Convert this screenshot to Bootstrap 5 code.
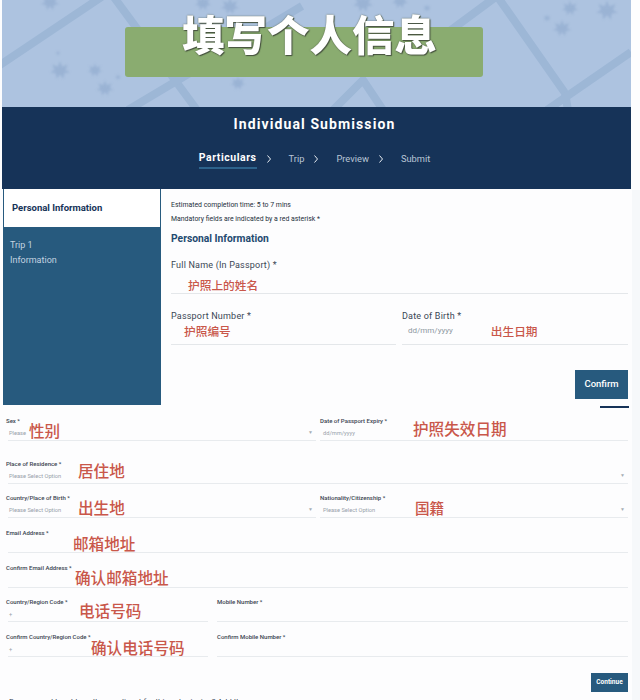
<!DOCTYPE html>
<html lang="zh">
<head>
<meta charset="utf-8">
<title>填写个人信息</title>
<link href="https://cdn.jsdelivr.net/npm/bootstrap@5.3.0/dist/css/bootstrap.min.css" rel="stylesheet">
<style>
html,body{background:#fdfdfe;font-family:"Roboto","Liberation Sans","Noto Sans CJK SC",sans-serif;}
body{width:640px;height:700px;overflow:hidden;position:relative;}
.hero{height:107px;margin-left:2px;width:629px;background:#adc3e0;position:relative;overflow:hidden;}
.hero-art{position:absolute;left:0;top:0;width:629px;height:107px;}
.soft{filter:blur(.6px);}
.softer{filter:blur(1px);}
.hero-plate{position:absolute;left:123px;top:27px;width:358px;height:50px;background:#8aac70;border-radius:3px;}
.hero-title{position:absolute;left:180px;top:8px;font:900 42.5px/50px "Noto Sans CJK SC",sans-serif;color:#fff;text-shadow:0 0 1.5px #46523f,1px 1px 1px #46523f;white-space:nowrap;}
.sub-head{height:82px;margin-left:2px;width:629px;background:#163358;color:#fff;text-align:center;}
.sub-title{font-size:14px;font-weight:700;letter-spacing:1.1px;line-height:18px;padding:8px 4px 0 0;}
.steps{margin-top:17px;font-size:9.3px;line-height:14px;color:#b9c6d6;padding-right:4px;}
.steps>span{margin-top:2px;}
.steps>.step-on{color:#fff;font-weight:700;font-size:10.5px;letter-spacing:.55px;border-bottom:2px solid #2d638c;padding-bottom:2px;margin-top:1px;}
.chev{width:4px;height:8px;margin:5px 18px 0 10px;flex:none;}
.top-part{height:216px;}
.side{width:158px;margin-left:3px;background:#275a7e;height:216px;flex:none;color:#c4d4e0;font-size:9px;}
.side-on{height:38px;margin:0 1px;background:#fff;color:#163358;font-weight:700;font-size:9.5px;padding:12px 8px 0;line-height:14px;}
.side-txt{padding:11px 7px;line-height:15px;}
.main{padding:9px 3px 0 10px;width:470px;flex:none;font-size:9px;color:#3a4654;}
.tiny{font-size:6.9px;line-height:14px;color:#25303c;}
.sect{font-size:10.3px;font-weight:700;color:#1f4a70;line-height:14px;margin-top:6px;}
.fld{border-bottom:1px solid #e4e7ea;height:36px;}
.f-a{margin-top:12px;}
.f-row{margin-top:15px;}
.f-l{width:225px;flex:none;}
.f-r{width:226px;flex:none;}
.lbl{line-height:14px;letter-spacing:.2px;}
.anno{color:#c9574a;font-family:"Noto Sans CJK SC",sans-serif;white-space:nowrap;font-weight:500;}
.a12{font-size:11.7px;line-height:16px;}
.n-name{padding-left:17px;margin-top:5px;}
.n-pass{padding-left:13px;margin-top:0;}
.dob{padding-left:6px;margin-top:0;}
.n-dob{margin-left:38px;}
.ph{color:#8e98a2;font-size:8px;}
.btn-blue{background:#275a7e;color:#fff;border:0;border-radius:0;font-weight:500;padding:0;}
.btn-a{width:53px;height:29px;font-size:9.5px;}
.btn-b{width:37px;height:19px;font-size:6.5px;font-weight:700;}
.btn-top{margin-top:25px;}
.btn-low{margin-top:6px;}
.rule{width:29px;height:2px;background:#163358;margin:1px 0 8px 600px;}
.low{padding:0 12px 0 6px;color:#3a4654;}
.low .lbl{font-size:6px;line-height:10px;font-weight:500;color:#3a4450;letter-spacing:0;}
.lowf{height:35px;min-width:0;}
.low .short{height:34px;}
.c-l{width:310px;flex:none;}
.c-r{width:308px;flex:none;margin-left:4px;}
.p-l{width:202px;flex:none;}
.p-r{width:411px;flex:none;margin-left:9px;}
.sp-top{margin-top:8px;}
.lowline{height:15px;margin-left:2px;border-bottom:1px solid #e8ebee;display:flex;align-items:center;position:relative;}
.c-r .lowline,.p-r .lowline{margin-left:0;}
.lowline .ph{font-size:5.7px;padding-left:1px;color:#98a1aa;}
.c-r .lowline .ph{padding-left:3px;}
.caret{margin-left:auto;font-size:5px;color:#a5adb5;padding-right:3px;}
.ov{position:absolute;font-size:15.6px;line-height:20px;}
.x-sex{left:21px;top:-6px;}
.x-exp{left:93px;top:-8px;}
.x-res{left:70px;top:-9px;}
.x-bir{left:70px;top:-6px;}
.x-nat{left:95px;top:-5px;font-size:14.6px;}
.x-em{left:65px;top:-5px;}
.x-cem{left:67px;top:-6px;}
.x-tel{left:71px;top:-7px;}
.x-ctel{left:83px;top:-5px;}
.foot{font-size:8px;color:#3a4654;line-height:10px;padding-left:9px;margin-top:5px;white-space:nowrap;}
.edge{position:absolute;left:632px;top:190px;width:8px;height:510px;background:#f6f8fa;}
</style>
</head>
<body>
<div class="edge"></div>
<div class="hero">
  <svg class="hero-art" viewBox="0 0 629 107" aria-hidden="true">
    <defs><path id="lf" d="M0-8 2-3 7-5 5 0 9 2 4 3 3 8 0 4-3 8-4 3-9 2-5 0-7-5-2-3Z"/></defs>
    <g class="soft" stroke="#9db7d6" stroke-width="8" fill="none">
      <path d="M-2 65 L101 -4"/>
      <path d="M111 -4 L195 110"/>
      <path d="M126 110 L300 6"/>
      <path d="M331 110 L361 80 L381 110"/>
      <path d="M445 33 L495 -4 L563 93 L566 110"/>
      <path d="M545 110 L629 52"/>
    </g>
    <g class="softer" fill="#9ab3d4">
      <use href="#lf" transform="translate(58 70) scale(1.1)"/>
      <use href="#lf" transform="translate(93 70) scale(.8)"/>
      <use href="#lf" transform="translate(103 88) scale(.95)"/>
      <use href="#lf" transform="translate(116 77) scale(.3)"/>
      <use href="#lf" transform="translate(56 53) scale(.25)"/>
      <use href="#lf" transform="translate(236 83) scale(.8)"/>
      <use href="#lf" transform="translate(48 2) scale(1)"/>
      <use href="#lf" transform="translate(201 3) scale(.9)"/>
      <use href="#lf" transform="translate(228 6) scale(1)"/>
      <use href="#lf" transform="translate(361 3) scale(1.1)"/>
      <use href="#lf" transform="translate(398 1) scale(.9)"/>
      <use href="#lf" transform="translate(425 8) scale(.4)"/>
      <use href="#lf" transform="translate(568 8) scale(.9)"/>
      <use href="#lf" transform="translate(605 10) scale(1.2)"/>
      <use href="#lf" transform="translate(560 28) scale(1)"/>
      <use href="#lf" transform="translate(545 18) scale(.4)"/>
    </g>
  </svg>
  <div class="hero-plate"></div>
  <div class="hero-title">填写个人信息</div>
</div>
<div class="sub-head">
  <div class="sub-title">Individual Submission</div>
  <div class="steps d-flex justify-content-center align-items-start">
    <span class="step-on">Particulars</span><svg class="chev" viewBox="0 0 4 8" aria-hidden="true"><path d="M.5.5 3.5 4 .5 7.5" fill="none" stroke="#e7edf3" stroke-width="1"/></svg>
    <span>Trip</span><svg class="chev" viewBox="0 0 4 8" aria-hidden="true"><path d="M.5.5 3.5 4 .5 7.5" fill="none" stroke="#e7edf3" stroke-width="1"/></svg>
    <span>Preview</span><svg class="chev" viewBox="0 0 4 8" aria-hidden="true"><path d="M.5.5 3.5 4 .5 7.5" fill="none" stroke="#e7edf3" stroke-width="1"/></svg>
    <span>Submit</span>
  </div>
</div>
<div class="top-part d-flex">
  <aside class="side">
    <div class="side-on">Personal Information</div>
    <div class="side-txt">Trip 1<br>Information</div>
  </aside>
  <div class="main">
    <div class="tiny">Estimated completion time: 5 to 7 mins</div>
    <div class="tiny">Mandatory fields are indicated by a red asterisk *</div>
    <div class="sect">Personal Information</div>
    <div class="fld f-a"><div class="lbl">Full Name (In Passport) *</div><div class="anno a12 n-name">护照上的姓名</div></div>
    <div class="d-flex f-row justify-content-between">
      <div class="fld f-l"><div class="lbl">Passport Number *</div><div class="anno a12 n-pass">护照编号</div></div>
      <div class="fld f-r"><div class="lbl">Date of Birth *</div><div class="d-flex align-items-center dob"><span class="ph">dd/mm/yyyy</span><span class="anno a12 n-dob">出生日期</span></div></div>
    </div>
    <div class="d-flex justify-content-end btn-top"><button class="btn btn-blue btn-a">Confirm</button></div>
  </div>
</div>
<div class="rule"></div>
<div class="low">
  <div class="d-flex">
    <div class="lowf c-l"><div class="lbl">Sex *</div><div class="lowline"><span class="ph">Please</span><span class="anno ov x-sex">性别</span><span class="caret">▼</span></div></div>
    <div class="lowf c-r"><div class="lbl">Date of Passport Expiry *</div><div class="lowline"><span class="ph">dd/mm/yyyy</span><span class="anno ov x-exp">护照失效日期</span></div></div>
  </div>
  <div class="lowf short sp-top"><div class="lbl">Place of Residence *</div><div class="lowline"><span class="ph">Please Select Option</span><span class="anno ov x-res">居住地</span><span class="caret">▼</span></div></div>
  <div class="d-flex">
    <div class="lowf c-l"><div class="lbl">Country/Place of Birth *</div><div class="lowline"><span class="ph">Please Select Option</span><span class="anno ov x-bir">出生地</span><span class="caret">▼</span></div></div>
    <div class="lowf c-r"><div class="lbl">Nationality/Citizenship *</div><div class="lowline"><span class="ph">Please Select Option</span><span class="anno ov x-nat">国籍</span><span class="caret">▼</span></div></div>
  </div>
  <div class="lowf"><div class="lbl">Email Address *</div><div class="lowline"><span class="anno ov x-em">邮箱地址</span></div></div>
  <div class="lowf short"><div class="lbl">Confirm Email Address *</div><div class="lowline"><span class="anno ov x-cem">确认邮箱地址</span></div></div>
  <div class="d-flex">
    <div class="lowf p-l"><div class="lbl">Country/Region Code *</div><div class="lowline"><span class="ph">+</span><span class="anno ov x-tel">电话号码</span></div></div>
    <div class="lowf p-r"><div class="lbl">Mobile Number *</div><div class="lowline"></div></div>
  </div>
  <div class="d-flex">
    <div class="lowf p-l"><div class="lbl">Confirm Country/Region Code *</div><div class="lowline"><span class="ph">+</span><span class="anno ov x-ctel">确认电话号码</span></div></div>
    <div class="lowf p-r"><div class="lbl">Confirm Mobile Number *</div><div class="lowline"></div></div>
  </div>
  <div class="d-flex justify-content-end btn-low"><button class="btn btn-blue btn-b">Continue</button></div>
</div>
<div class="foot">Do you need to add another applicant for this submission? Add them</div>
<script src="https://cdn.jsdelivr.net/npm/bootstrap@5.3.0/dist/js/bootstrap.bundle.min.js"></script>
</body>
</html>
